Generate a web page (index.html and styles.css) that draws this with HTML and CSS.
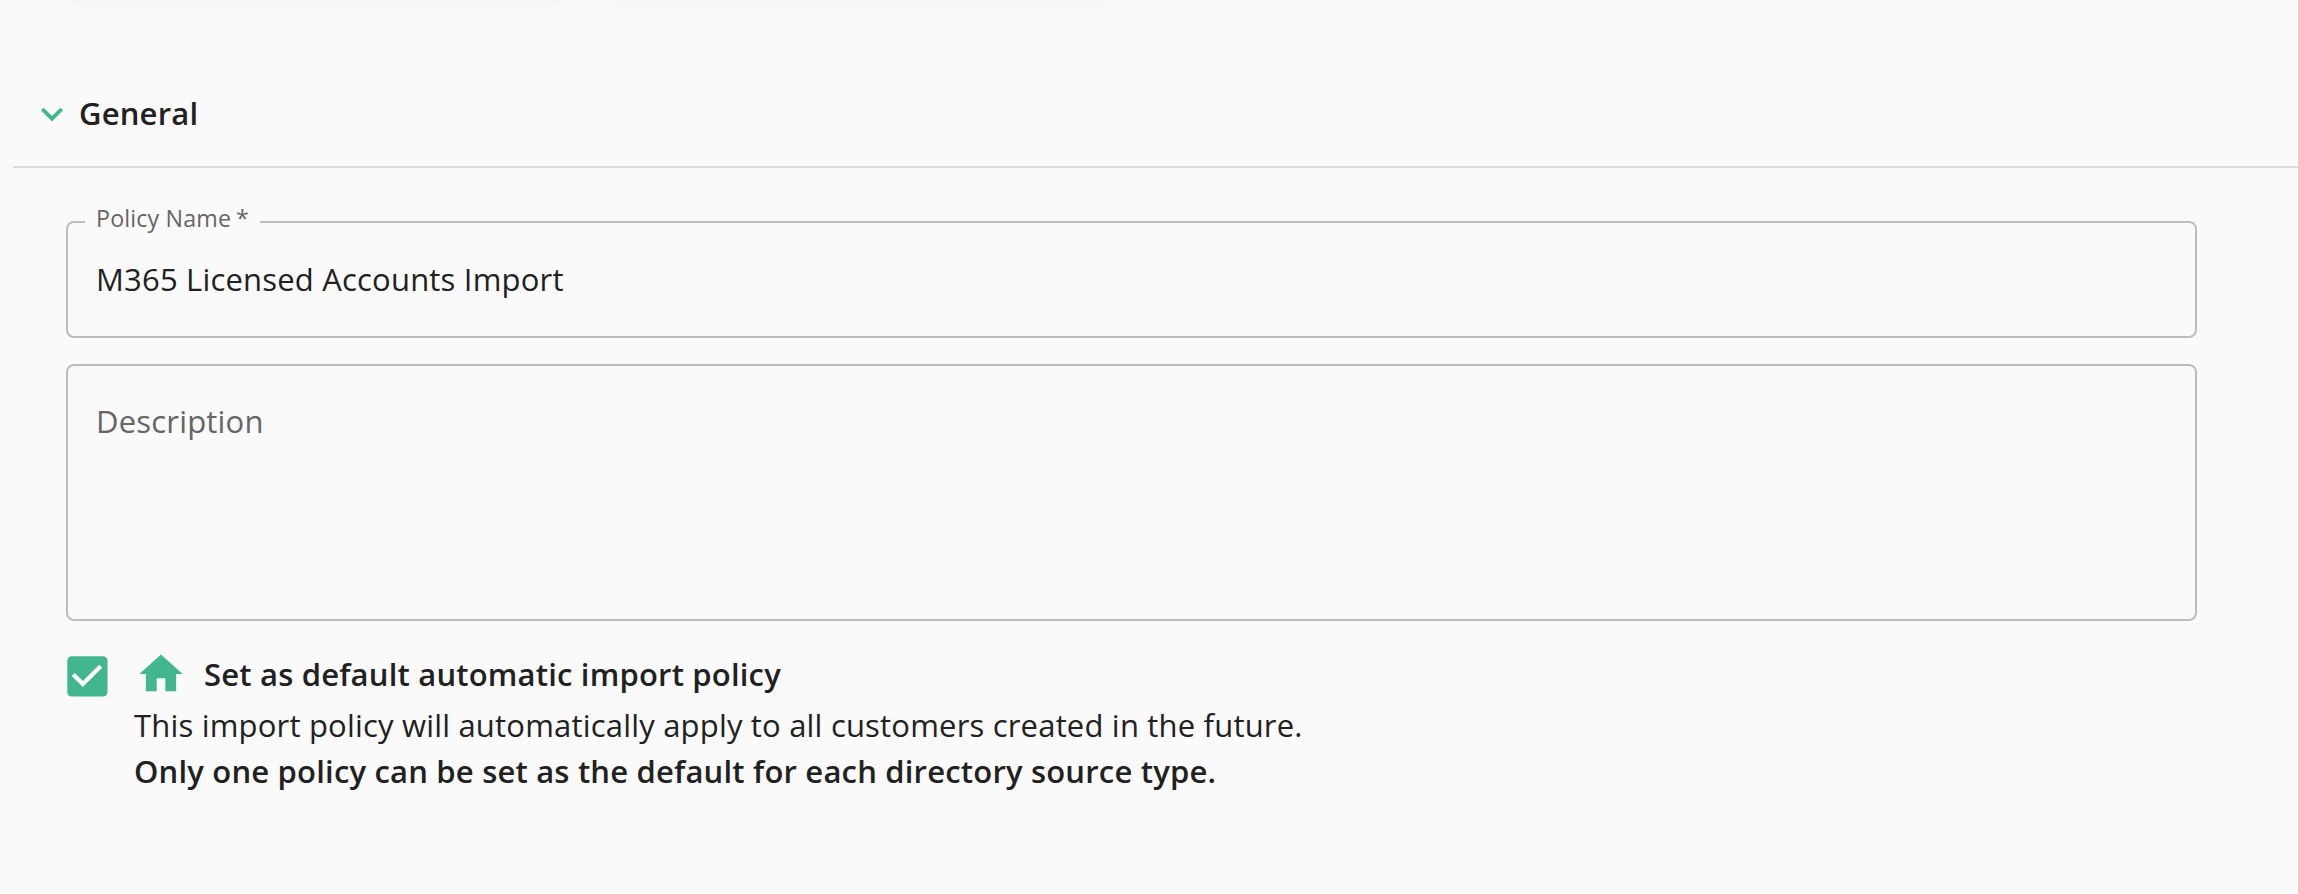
FILE: index.html
```html
<!DOCTYPE html>
<html lang="en">
<head>
<meta charset="utf-8">
<title>Import policy</title>
<link rel="stylesheet" href="styles.css">
</head>
<body>
<div class="cards"><div class="card"></div><div class="card"></div></div>
<header class="section-header">
  <svg class="chevron" width="24" height="16" viewBox="0 0 24 16"><path d="M2.3 3l9.7 9.7L21.7 3" fill="none" stroke="#42b68f" stroke-width="3.8"/></svg>
  <h2 class="section-title">General</h2>
</header>
<main class="section-body">
  <fieldset class="field">
    <legend class="field-label">Policy Name<span class="star">*</span></legend>
    <div class="field-value">M365 Licensed Accounts Import</div>
  </fieldset>
  <div class="textarea">Description</div>
  <div class="option">
    <svg class="checkbox" width="41" height="41" viewBox="0 0 41 41"><rect x=".3" y=".3" width="40.2" height="40.2" rx="4.5" fill="#42b68f"/><path d="M6.3 18.5l9.5 9.5L33.7 10.2" fill="none" stroke="#fff" stroke-width="4.3"/></svg>
    <div class="option-text">
      <div class="option-title">
        <svg class="home" width="52" height="52" viewBox="0 0 24 24"><path d="M10 20v-6h4v6h5v-8h3L12 3 2 12h3v8z" fill="#42b68f"/></svg>
        <span class="strong title-label">Set as default automatic import policy</span>
      </div>
      <div class="line">This import policy will automatically apply to all customers created in the future.</div>
      <div class="line strong">Only one policy can be set as the default for each directory source type.</div>
    </div>
  </div>
</main>
</body>
</html>
```
FILE: styles.css
```css
* { box-sizing: border-box; }
body {
  margin: 0;
  width: 2298px;
  height: 894px;
  overflow: hidden;
  background: #fafafa;
  color: #212121;
  font-family: "Open Sans", sans-serif;
  font-size: 31px;
  letter-spacing: 0.19px;
  white-space: nowrap;
}
.cards { display: flex; gap: 46px; height: 0; padding-left: 68px; }
.card {
  width: 496px;
  height: 100px;
  margin-top: -104px;
  box-shadow: 0 4px 20px rgba(0, 0, 0, 0.04);
}
.section-header {
  display: flex;
  align-items: center;
  height: 168px;
  margin-left: 13px;
  padding: 60px 0 0 27px;
  border-bottom: 2px solid #dcdcdc;
}
.chevron { margin-top: 1px; }
.section-title {
  margin: 0 0 0 15px;
  font-size: 31px;
  font-weight: 600;
  line-height: 106px;
}
.section-body { padding: 34px 101px 0 66px; }
.field {
  height: 136px;
  margin: 0;
  padding: 0 0 0 17px;
  border: 2px solid #bdbdbd;
  border-radius: 8px;
}
.field-label {
  width: 175px;
  height: 40px;
  padding: 0 0 8px 11px;
  color: #666;
  font-size: 23.25px;
  letter-spacing: 0.14px;
  line-height: 32px;
}
.star { margin-left: 5px; }
.field-value { padding-left: 11px; line-height: 75px; }
.textarea {
  height: 257px;
  margin-top: 26px;
  padding: 33px 0 0 28px;
  border: 2px solid #bdbdbd;
  border-radius: 8px;
  color: #666;
  line-height: 44px;
}
.option { display: flex; align-items: flex-start; padding-top: 25px; }
.checkbox { margin: 10px 26px 0 1px; }
.option-title { display: flex; align-items: center; height: 56px; }
.home { margin-left: 0.5px; }
.title-label { margin-left: 17.5px; }
.line { line-height: 46px; }
.strong { font-weight: 600; }
```
